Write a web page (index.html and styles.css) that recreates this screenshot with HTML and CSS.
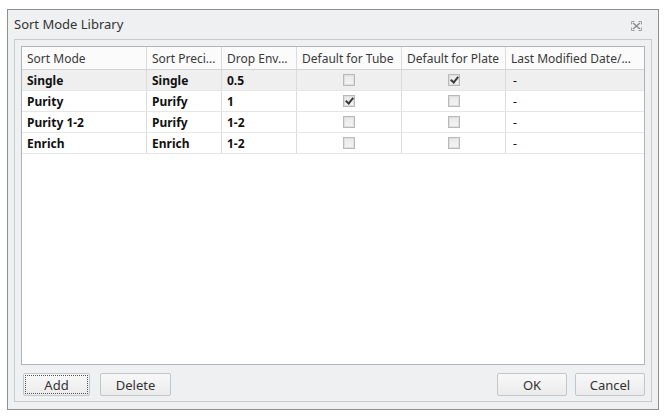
FILE: index.html
```html
<!DOCTYPE html>
<html lang="en">
<head>
<meta charset="utf-8">
<title>Sort Mode Library</title>
<link rel="stylesheet" href="styles.css">
</head>
<body>
<div class="dialog">
  <div class="titlebar">
    <span class="title">Sort Mode Library</span>
    <svg class="close" width="11" height="10" viewBox="0 0 11 10">
      <path d="M2 2 L9 8 M9 2 L2 8" stroke="#8c8c8c" stroke-width="1.5" fill="none"/>
      <path d="M0.5 0.5 h3 M0.5 0.5 v3 M10.5 0.5 h-3 M10.5 0.5 v3 M0.5 9.5 h3 M0.5 9.5 v-3 M10.5 9.5 h-3 M10.5 9.5 v-3" stroke="#a0a0a0" stroke-width="1" fill="none"/>
    </svg>
  </div>
  <div class="panel">
    <div class="grid">
      <div class="row head">
        <div class="cell">Sort Mode</div>
        <div class="cell">Sort Preci...</div>
        <div class="cell">Drop Env...</div>
        <div class="cell">Default for Tube</div>
        <div class="cell">Default for Plate</div>
        <div class="cell">Last Modified Date/...</div>
      </div>
      <div class="row selected">
        <div class="cell">Single</div>
        <div class="cell">Single</div>
        <div class="cell">0.5</div>
        <div class="cell center"><span class="check"></span></div>
        <div class="cell center"><span class="check on"></span></div>
        <div class="cell plain">-</div>
      </div>
      <div class="row">
        <div class="cell">Purity</div>
        <div class="cell">Purify</div>
        <div class="cell">1</div>
        <div class="cell center"><span class="check on"></span></div>
        <div class="cell center"><span class="check"></span></div>
        <div class="cell plain">-</div>
      </div>
      <div class="row">
        <div class="cell">Purity 1-2</div>
        <div class="cell">Purify</div>
        <div class="cell">1-2</div>
        <div class="cell center"><span class="check"></span></div>
        <div class="cell center"><span class="check"></span></div>
        <div class="cell plain">-</div>
      </div>
      <div class="row">
        <div class="cell">Enrich</div>
        <div class="cell">Enrich</div>
        <div class="cell">1-2</div>
        <div class="cell center"><span class="check"></span></div>
        <div class="cell center"><span class="check"></span></div>
        <div class="cell plain">-</div>
      </div>
    </div>
    <div class="buttons">
      <button class="btn focus">Add</button>
      <button class="btn delete">Delete</button>
      <span class="spacer"></span>
      <button class="btn">OK</button>
      <button class="btn">Cancel</button>
    </div>
  </div>
</div>
</body>
</html>
```

FILE: styles.css
```css
body {
  margin: 0;
  background: #fff;
  font-family: "Noto Sans", "Open Sans", sans-serif;
  font-size: 12px;
  color: #222;
}
.dialog {
  margin: 9px 0 0 7px;
  width: 650px;
  height: 399px;
  border: 1px solid #8f8f8f;
  background: #eff0f2;
  display: flex;
  flex-direction: column;
}
.titlebar {
  height: 29px;
  display: flex;
  align-items: center;
  padding: 0 16px 0 6px;
}
.title {
  flex: 1;
  font-size: 13px;
  color: #333;
  margin-top: -1px;
}
.close {
  margin-top: 3px;
}
.panel {
  margin: 0 6px 7px 6px;
  border: 1px solid #c8c9cb;
  padding: 6px 6px 5px 6px;
  flex: 1;
  display: flex;
  flex-direction: column;
}
.grid {
  height: 317px;
  border: 1px solid #b3b4b6;
  background: #fff;
}
.row {
  display: grid;
  grid-template-columns: 125px 75px 75px 105px 104px 1fr;
  height: 20px;
  border-bottom: 1px solid #e6e6e6;
}
.row.head {
  height: 22px;
  border-bottom: 1px solid #d4d4d4;
  background: #fbfbfb;
}
.cell {
  border-right: 1px solid #dcdcdc;
  padding-left: 5px;
  display: flex;
  align-items: center;
  font-weight: bold;
  color: #111;
  white-space: nowrap;
  overflow: hidden;
}
.cell:last-child {
  border-right: none;
}
.head .cell {
  font-weight: normal;
  color: #3a3a3a;
}
.cell.center {
  justify-content: center;
  padding-left: 0;
}
.cell.plain {
  font-weight: normal;
  padding-left: 7px;
}
.row.selected {
  background: #efefef;
}
.check {
  width: 10px;
  height: 10px;
  border: 1px solid #b9b9b9;
  background: linear-gradient(#e9e9e9, #f4f4f4);
  box-shadow: inset 0 0 0 1px #dedede;
  position: relative;
}
.check.on::after {
  content: "";
  position: absolute;
  left: 3px;
  top: 0px;
  width: 3px;
  height: 6px;
  border-right: 2px solid #3a3a3a;
  border-bottom: 2px solid #3a3a3a;
  transform: rotate(40deg);
}
.buttons {
  display: flex;
  margin-top: 8px;
}
.spacer {
  flex: 1;
}
.btn {
  height: 23px;
  width: 70px;
  font-family: inherit;
  font-size: 13px;
  color: #333;
  border: 1px solid #c5c6c8;
  border-radius: 2px;
  background: linear-gradient(#f8f8f8, #ebebec);
  padding: 0;
  margin-left: 8px;
}
.btn.focus {
  width: 67px;
  margin-left: 2px;
  outline: 1px dotted #555;
  outline-offset: -3px;
}
.btn.delete {
  width: 71px;
  margin-left: 10px;
}
```
